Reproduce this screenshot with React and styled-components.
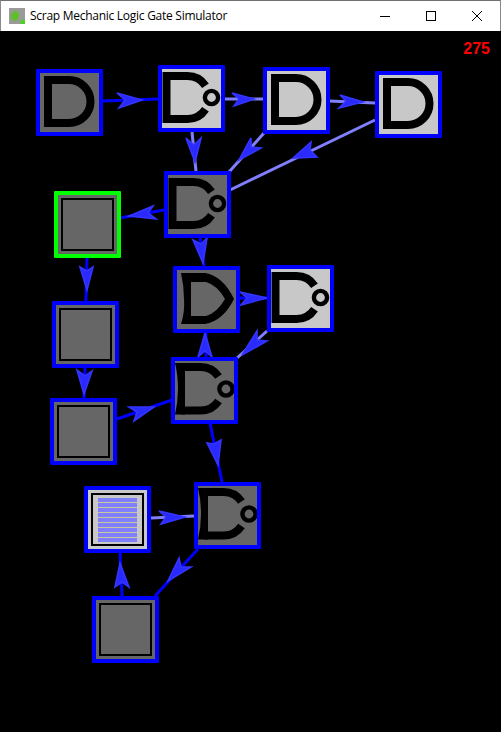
import React from "react";
import styled, { createGlobalStyle } from "styled-components";

const BLUE = "#0000ff";
const LIGHT = "#8080ff";
const GREY = "#666666";
const PALE = "#c8c8c8";

const nodes = [
  { x: 36, y: 69, kind: "and" },
  { x: 158, y: 65, kind: "nor", lit: true },
  { x: 263, y: 67, kind: "and", lit: true },
  { x: 375, y: 71, kind: "and", lit: true },
  { x: 164, y: 171, kind: "nor" },
  { x: 54, y: 191, kind: "or", selected: true },
  { x: 173, y: 266, kind: "xor" },
  { x: 267, y: 265, kind: "nor", lit: true },
  { x: 171, y: 357, kind: "xnor" },
  { x: 52, y: 301, kind: "or" },
  { x: 50, y: 398, kind: "or" },
  { x: 84, y: 486, kind: "latch", lit: true },
  { x: 194, y: 482, kind: "xnor" },
  { x: 92, y: 596, kind: "or" },
];

// from, to, barb, tip, barb, notch
const wires = [
  { from: [103, 101], to: [158, 99], head: "117,93 142,100 119,108 125,100" },
  { from: [225, 99], to: [263, 99], lit: true, head: "232,93 254,99 234,106 239,99" },
  { from: [329, 101], to: [375, 103], lit: true, head: "340,95 363,102 339,108 346,101" },
  { from: [192, 132], to: [196, 171], lit: true, head: "186,138 195,162 201,138 194,145" },
  { from: [264, 133], to: [229, 172], lit: true, head: "251,138 239,160 261,148 251,147" },
  { from: [375, 120], to: [230, 190], lit: true, head: "311,142 293,158 317,157 310,150" },
  { from: [164, 210], to: [120, 218], head: "153,206 129,216 156,219 148,213" },
  { from: [87, 257], to: [86, 301], head: "80,267 87,290 93,267 87,271" },
  { from: [200, 237], to: [204, 266], head: "193,240 203,263 207,238 201,244" },
  { from: [239, 298], to: [267, 298], head: "240,292 267,298 241,305 247,298" },
  { from: [267, 331], to: [237, 358], lit: true, head: "257,331 242,355 267,341 257,340" },
  { from: [206, 357], to: [206, 332], head: "198,357 205,333 212,357 205,351" },
  { from: [85, 367], to: [84, 398], head: "77,370 84,394 92,371 85,376" },
  { from: [117, 419], to: [172, 400], head: "129,407 154,407 134,421 137,412" },
  { from: [210, 423], to: [222, 482], head: "207,443 218,465 221,440 214,444" },
  { from: [151, 518], to: [194, 516], lit: true, head: "159,511 185,517 161,524 166,517" },
  { from: [198, 549], to: [155, 596], head: "179,558 168,581 191,567 181,567" },
  { from: [122, 596], to: [120, 552], head: "115,587 120,563 129,587 122,582" },
];

const GlobalStyle = createGlobalStyle`
  html, body {
    margin: 0;
    background: #000;
  }
`;

const Window = styled.div`
  width: 501px;
  height: 732px;
  display: flex;
  flex-direction: column;
  overflow: hidden;
`;

const TitleBar = styled.header`
  box-sizing: border-box;
  height: 31px;
  flex-shrink: 0;
  display: flex;
  align-items: center;
  background: #fff;
  border-top: 1px solid #707070;
  border-left: 1px solid #8a8a8a;
  border-right: 1px solid #8a8a8a;
  padding-left: 8px;
  padding-bottom: 1px;
`;

const Title = styled.span`
  margin-left: 5px;
  font-family: "Open Sans", "Noto Sans", sans-serif;
  font-size: 12px;
  letter-spacing: -0.27px;
  color: #000;
  flex: 1;
`;

const Controls = styled.div`
  display: flex;
`;

const ControlButton = styled.div`
  width: 46px;
  height: 30px;
  display: flex;
  align-items: center;
  justify-content: center;
  svg {
    display: block;
  }
`;

const Canvas = styled.main`
  position: relative;
  flex: 1;
  background: #000;
`;

const Wires = styled.svg`
  position: absolute;
  left: 0;
  top: -31px;
  width: 501px;
  height: 732px;
`;

const Score = styled.div`
  position: absolute;
  top: 8px;
  right: 11px;
  font-family: "Liberation Sans", Arial, sans-serif;
  font-weight: 700;
  font-size: 16px;
  line-height: 20px;
  color: #ff0000;
`;

const Node = styled.div`
  position: absolute;
  left: ${(p) => p.$x}px;
  top: ${(p) => p.$y - 31}px;
  box-sizing: border-box;
  width: 67px;
  height: 67px;
  display: flex;
  align-items: center;
  justify-content: center;
  border: 4px solid ${(p) => (p.$selected ? "#00ff00" : BLUE)};
  border-radius: 1px;
  background: ${(p) => (p.$lit ? PALE : GREY)};
`;

const Glyph = styled.svg`
  display: block;
  width: 59px;
  height: 59px;
`;

const OrFrame = styled.div`
  box-sizing: border-box;
  width: 53px;
  height: 53px;
  border: 2px solid #000;
`;

const LatchFrame = styled(OrFrame)`
  display: flex;
  align-items: center;
  justify-content: center;
`;

const Stripes = styled.div`
  width: 39px;
  height: 44px;
  display: flex;
  flex-direction: column;
  gap: 1px;
  background: #c8c8a0;
`;

const Stripe = styled.div`
  flex: 1;
  background: ${LIGHT};
`;

function Bubble({ cx, cy }) {
  return <circle cx={cx} cy={cy} r="6.6" fill="none" stroke="#000" strokeWidth="4.4" />;
}

function GateGlyph({ kind }) {
  const box = "4 4 59 59";
  if (kind === "and") {
    return (
      <Glyph viewBox={box}>
        <path d="M12 11 H33 A21.5 21.5 0 0 1 33 54 H12 Z" fill="none" stroke="#000" strokeWidth="8" />
      </Glyph>
    );
  }
  if (kind === "nor") {
    return (
      <Glyph viewBox={box}>
        <path
          d="M47.5 20.7 A21.5 21.5 0 0 0 29.5 11 H8.5 V54 H29.5 A21.5 21.5 0 0 0 47.5 44.3"
          fill="none"
          stroke="#000"
          strokeWidth="8"
        />
        <Bubble cx="53.5" cy="32.5" />
      </Glyph>
    );
  }
  if (kind === "xor") {
    return (
      <Glyph viewBox={box}>
        <path
          fillRule="evenodd"
          d="M8 7 H32 Q50 10 61 33 Q50 55 32 58 H8 Q12 46 11 33 Q11 20 8 7 Z M18 16 V50 H33 Q44 47 52 33 Q44 19 33 16 Z"
        />
      </Glyph>
    );
  }
  // xnor
  return (
    <Glyph viewBox={box}>
      <path
        d="M47.5 19.5 A21.5 21.5 0 0 0 29.5 10 H10 M10 53.5 H29.5 A21.5 21.5 0 0 0 47.5 44"
        fill="none"
        stroke="#000"
        strokeWidth="8"
      />
      <path d="M4 6 H14 V57.5 H4 Q7 45 7 32 Q7 18 4 6 Z" />
      <Bubble cx="55" cy="32" />
    </Glyph>
  );
}

function NodeBody({ kind }) {
  if (kind === "or") return <OrFrame />;
  if (kind === "latch") {
    return (
      <LatchFrame>
        <Stripes>
          {Array.from({ length: 9 }, (_, i) => (
            <Stripe key={i} />
          ))}
        </Stripes>
      </LatchFrame>
    );
  }
  return <GateGlyph kind={kind} />;
}

function AppIcon() {
  return (
    <svg width="16" height="16" viewBox="0 0 16 16">
      <defs>
        <filter id="soft">
          <feGaussianBlur stdDeviation="0.6" />
        </filter>
      </defs>
      <rect width="16" height="16" fill="#9a9a9a" />
      <ellipse cx="6" cy="8" rx="4" ry="5" fill="#5fbf2a" filter="url(#soft)" transform="rotate(20 6 8)" />
      <circle cx="14" cy="14" r="2.6" fill="#4fd020" />
    </svg>
  );
}

export default function App() {
  return (
    <Window>
      <GlobalStyle />
      <TitleBar>
        <AppIcon />
        <Title>Scrap Mechanic Logic Gate Simulator</Title>
        <Controls>
          <ControlButton>
            <svg width="10" height="10" viewBox="0 0 10 10">
              <path d="M0 5.5 H10" stroke="#000" />
            </svg>
          </ControlButton>
          <ControlButton>
            <svg width="10" height="10" viewBox="0 0 10 10">
              <rect x="0.5" y="0.5" width="9" height="9" fill="none" stroke="#000" />
            </svg>
          </ControlButton>
          <ControlButton>
            <svg width="10" height="10" viewBox="0 0 10 10">
              <path d="M0 0 L10 10 M10 0 L0 10" stroke="#000" strokeWidth="1" />
            </svg>
          </ControlButton>
        </Controls>
      </TitleBar>
      <Canvas>
        <Wires viewBox="0 0 501 732">
          {wires.map((w, i) => (
            <g key={i}>
              <line
                x1={w.from[0]}
                y1={w.from[1]}
                x2={w.to[0]}
                y2={w.to[1]}
                stroke={w.lit ? LIGHT : BLUE}
                strokeWidth="3"
              />
              <polygon points={w.head} fill="#2a2aff" stroke="#3434ff" strokeWidth="1.6" strokeLinejoin="miter" />
            </g>
          ))}
        </Wires>
        {nodes.map((n, i) => (
          <Node key={i} $x={n.x} $y={n.y} $lit={n.lit} $selected={n.selected}>
            <NodeBody kind={n.kind} />
          </Node>
        ))}
        <Score>275</Score>
      </Canvas>
    </Window>
  );
}
